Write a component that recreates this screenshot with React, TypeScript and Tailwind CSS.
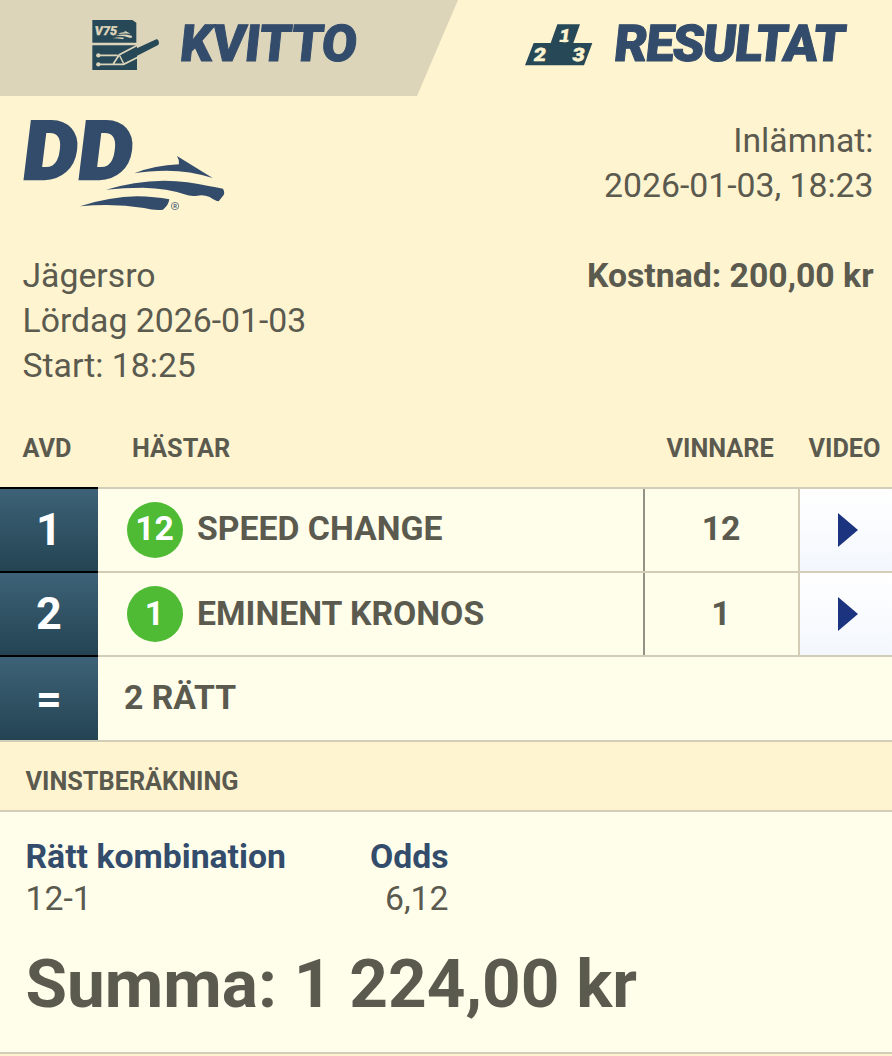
import React from 'react';

type Leg = {
  avd: string;
  number: string;
  horse: string;
  winner: string;
};

const legs: Leg[] = [
  { avd: '1', number: '12', horse: 'SPEED CHANGE', winner: '12' },
  { avd: '2', number: '1', horse: 'EMINENT KRONOS', winner: '1' },
];

const ReceiptIcon: React.FC = () => (
  <svg className="h-[50px] w-[68px] shrink-0" viewBox="35 60 204 150">
    <path d="M36 60H156L168 68V128H36Z" fill="#274857" />
    <path d="M36 136H170V210H36Z" fill="#274857" />
    <text
      transform="translate(42 104) skewX(-8)"
      textLength="67"
      lengthAdjust="spacingAndGlyphs"
      fontFamily="Roboto, sans-serif"
      fontWeight="900"
      fontSize="37"
      fill="#ddd5ba"
      stroke="#ddd5ba"
      strokeWidth="1"
    >
      V75
    </text>
    <path
      d="M112 102Q122 96 133 97L133 92L151 101Q134 99 112 102ZM105 108Q128 100 154 107L156 112L150 114Q128 106 105 108ZM97 115Q115 110 131 113L128 118Q112 114 97 115Z"
      fill="#ddd5ba"
    />
    <circle cx="54" cy="166" r="6.5" fill="#ddd5ba" />
    <circle cx="54" cy="193" r="6.5" fill="#ddd5ba" />
    <path
      d="M54 166H112M54 193H130L174 171M99 191L117 164L174 134"
      fill="none"
      stroke="#ddd5ba"
      strokeWidth="5"
    />
    <path d="M109 187L118 172L125 187Z" fill="#274857" />
    <path d="M124 166L228 118Q234 117 236 128Q236 134 232 136L134 186Z" fill="#274857" />
    <path d="M118 167L130 191" stroke="#ddd5ba" strokeWidth="4" />
  </svg>
);

const PodiumIcon: React.FC = () => (
  <svg className="h-[42px] w-[68px] shrink-0" viewBox="375 72 204 126">
    <path
      d="M472 73H540L520 129H577L552 196H375L401 129H452Z"
      fill="#274857"
    />
    <g
      fontFamily="Roboto, sans-serif"
      fontWeight="900"
      fontSize="55"
      fill="#fff4d0"
      stroke="#fff4d0"
      strokeWidth="1.5"
    >
      <text transform="translate(476 125) skewX(-8)">1</text>
      {/* foot of the 1 */}
      <path d="M479 119H506L505 126H478Z" stroke="none" />
      <text transform="translate(399 183) skewX(-8) scale(1.15 1)">2</text>
      <text transform="translate(515 183) skewX(-8) scale(1.15 1)">3</text>
    </g>
  </svg>
);

const Logo: React.FC = () => (
  <svg className="-ml-1 h-[95px] w-[209px] overflow-visible" viewBox="57 39 627 285">
    <text
      transform="translate(67 222) skewX(-7)"
      x="-6"
      y="0"
      textLength="330"
      lengthAdjust="spacingAndGlyphs"
      fontFamily="Roboto, sans-serif"
      fontWeight="900"
      fontSize="244"
      fill="#334c6b"
      stroke="#334c6b"
      strokeWidth="7"
    >
      DD
    </text>
    <g fill="#334c6b">
      <path d="M403 205Q464 181 537 178Q539 166 531 153L638 219Q570 197 500 197Q445 197 403 205Z" />
      <path d="M318 254Q400 229 493 227Q565 228 626 243Q647 246 669 251Q675 262 671 270L656 289Q646 288 629 276Q612 269 592 272Q572 275 553 268Q505 250 429 248Q370 248 318 254Z" />
      <path d="M240 304Q330 275 411 274Q465 275 508 283Q506 300 489 314Q465 317 432 309Q340 294 240 304Z" />
    </g>
    <circle cx="525" cy="303" r="11" fill="none" stroke="#334c6b" strokeWidth="2" />
    <text
      x="525"
      y="309"
      textAnchor="middle"
      fontFamily="Roboto, sans-serif"
      fontSize="17"
      fontWeight="500"
      fill="#334c6b"
    >
      R
    </text>
  </svg>
);

const PlayButton: React.FC = () => (
  <button className="flex w-[94px] items-center border-l-2 border-[#d3cdb8] bg-gradient-to-b from-white to-[#f3f7fd] pl-[38px]">
    <svg className="h-[34px] w-5" viewBox="0 0 20 34">
      <path d="M0 0L20 17L0 34Z" fill="#1c347f" />
    </svg>
  </button>
);

const AvdCell: React.FC<{ children: React.ReactNode }> = ({ children }) => (
  <div className="flex w-[98px] items-center justify-center border-t-2 border-black bg-gradient-to-b from-[#3d6277] to-[#244453] pb-px text-[45px] leading-none font-bold text-white">
    {children}
  </div>
);

const App: React.FC = () => {
  return (
    <div className="h-[1056px] w-[892px] overflow-hidden bg-[#fff4d0] font-[Roboto,sans-serif] text-[33.75px] leading-[45px] text-[#5b5a4f]">
      <header className="flex h-24">
        <button className="flex w-[458px] items-start bg-[#ddd5ba] pt-5 pl-[91.5px] [clip-path:polygon(0_0,100%_0,417px_100%,0_100%)]">
          <ReceiptIcon />
          <span className="ml-[18px] origin-bottom-left -skew-x-[6deg] text-[51px] leading-[47px] font-black tracking-[-0.7px] text-[#334c6b] [-webkit-text-stroke:1px_#334c6b]">
            KVITTO
          </span>
        </button>
        <button className="flex flex-1 items-start pt-5 pl-[67px]">
          <span className="pt-1">
            <PodiumIcon />
          </span>
          <span className="ml-[19px] origin-bottom-left -skew-x-[6deg] text-[51px] leading-[47px] font-black tracking-[-1.7px] text-[#334c6b] [-webkit-text-stroke:1px_#334c6b]">
            RESULTAT
          </span>
        </button>
      </header>

      <section className="flex h-[157px] justify-between pt-[22px] pr-[18.5px] pl-[23px]">
        <Logo />
        <p className="text-right">
          Inlämnat:
          <br />
          2026-01-03, 18:23
        </p>
      </section>

      <section className="flex h-[170px] justify-between pr-[18.5px] pl-[22.5px]">
        <p>
          Jägersro
          <br />
          Lördag 2026-01-03
          <br />
          Start: 18:25
        </p>
        <p className="font-bold">Kostnad: 200,00 kr</p>
      </section>

      <div className="flex h-16 pt-[11px] text-[25.3px] leading-[30px] font-bold">
        <span className="w-[132px] pl-[22.5px]">AVD</span>
        <span className="flex-1">HÄSTAR</span>
        <span className="w-[142px]">VINNARE</span>
        <span className="w-[83.5px]">VIDEO</span>
      </div>

      {legs.map((leg) => (
        <div key={leg.avd} className="flex h-[84.2px] bg-[#fffeeb] font-bold">
          <AvdCell>{leg.avd}</AvdCell>
          <div className="flex flex-1 border-t-2 border-[#d3cdb8]">
            <div className="flex flex-1 items-center pl-[29px]">
              <span className="flex h-14 w-14 items-center justify-center rounded-full bg-[#4fbb34] pr-px pb-[2.5px] text-white">
                {leg.number}
              </span>
              <span className="ml-[14px] pb-[2.5px]">{leg.horse}</span>
            </div>
            <div className="flex w-[155px] items-center justify-center border-l-2 border-[#959284] pr-px pb-[2.5px]">
              {leg.winner}
            </div>
            <PlayButton />
          </div>
        </div>
      ))}
      <div className="flex h-[84.6px] bg-[#fffeeb] font-bold">
        <AvdCell>=</AvdCell>
        <div className="flex flex-1 items-center border-t-2 border-[#d3cdb8] pb-[2px] pl-[26px]">
          2 RÄTT
        </div>
      </div>

      <h2 className="h-[72px] border-y-2 border-[#d3cdb8] pt-[25px] pl-[25.5px] text-[25.3px] leading-[30px] font-bold">
        VINSTBERÄKNING
      </h2>

      <section className="h-[242px] border-b-2 border-[#d3cdb8] bg-[#fffeeb] pt-6 pl-[25.5px]">
        <div className="flex leading-[42px]">
          <div className="w-[260px]">
            <p className="whitespace-nowrap font-bold text-[#334c6b]">Rätt kombination</p>
            <p>12-1</p>
          </div>
          <div className="w-[163px] text-right">
            <p className="font-bold text-[#334c6b]">Odds</p>
            <p>6,12</p>
          </div>
        </div>
        <p className="mt-6 text-[67.5px] leading-[80px] font-bold">
          Summa: 1 224,00 kr
        </p>
      </section>
    </div>
  );
};

export default App;
